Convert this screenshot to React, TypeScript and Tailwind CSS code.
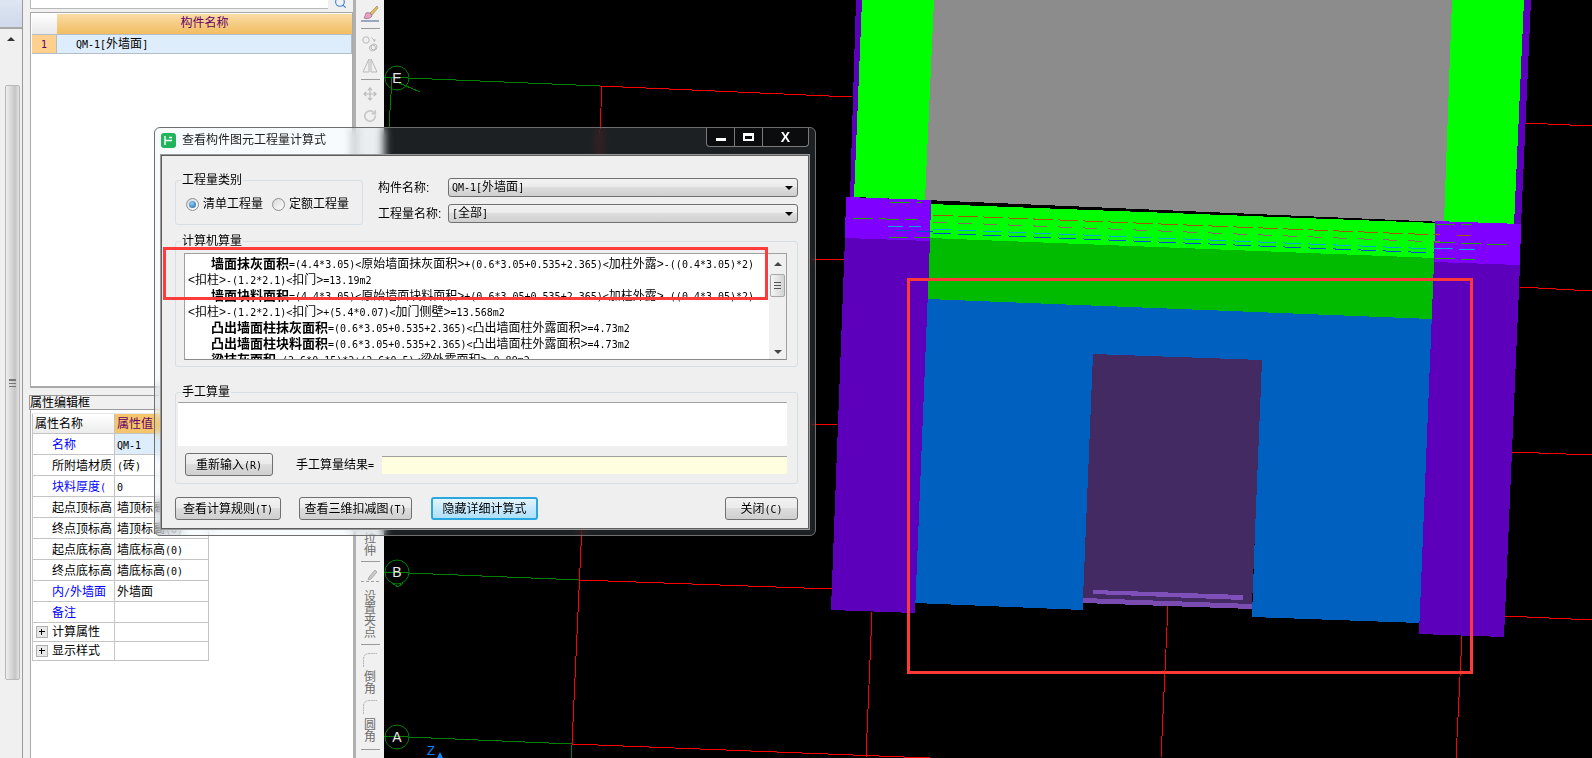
import { Move, RotateCw, Search } from 'lucide-react'

const latin = "font-['DejaVu_Sans_Mono',monospace] text-[10px]"

// SimSun style text: half width latin, full width hanzi
function Mixed({ text }: { text: string }) {
  const parts = text.split(/([<>]|[\x00-\x7f]+)/).filter(Boolean)
  return (
    <>
      {parts.map((p, i) => {
        if (p === '<' || p === '>') return <span key={i} className="font-['Liberation_Sans',sans-serif] text-[12px]">{p}</span>
        if (p.charCodeAt(0) < 128) return <span key={i} className={latin}>{p}</span>
        return <span key={i}>{p}</span>
      })}
    </>
  )
}

const formulaLines = [
  { name: '墙面抹灰面积', rest: '=(4.4*3.05)<原始墙面抹灰面积>+(0.6*3.05+0.535+2.365)<加柱外露>-((0.4*3.05)*2)' },
  { rest: '<扣柱>-(1.2*2.1)<扣门>=13.19m2' },
  { name: '墙面块料面积', rest: '=(4.4*3.05)<原始墙面块料面积>+(0.6*3.05+0.535+2.365)<加柱外露>-((0.4*3.05)*2)' },
  { rest: '<扣柱>-(1.2*2.1)<扣门>+(5.4*0.07)<加门侧壁>=13.568m2' },
  { name: '凸出墙面柱抹灰面积', rest: '=(0.6*3.05+0.535+2.365)<凸出墙面柱外露面积>=4.73m2' },
  { name: '凸出墙面柱块料面积', rest: '=(0.6*3.05+0.535+2.365)<凸出墙面柱外露面积>=4.73m2' },
  { name: '梁抹灰面积', rest: '=(2.6*0.15)*2+(2.6*0.5)<梁外露面积>=0.89m2' },
]

const propRows = [
  { name: '名称', value: 'QM-1', blue: true, active: true },
  { name: '所附墙材质', value: '(砖)' },
  { name: '块料厚度(', value: '0', blue: true },
  { name: '起点顶标高', value: '墙顶标高(0)' },
  { name: '终点顶标高', value: '墙顶标高(0)' },
  { name: '起点底标高', value: '墙底标高(0)' },
  { name: '终点底标高', value: '墙底标高(0)' },
  { name: '内/外墙面', value: '外墙面', blue: true },
  { name: '备注', value: '', blue: true },
]

const polys = [
  { fill: '#5c00bc', points: '856,0 862,0 854,197 850,197' },
  { fill: '#00ff00', points: '862,0 934,0 925,200 854,197' },
  { fill: '#8c8c8c', points: '934,0 1452,0 1444,222 925,200' },
  { fill: '#00ff00', points: '1452,0 1524,0 1514,225 1444,222' },
  { fill: '#5c00bc', points: '1524,0 1531,0 1521,225 1514,225' },
  { fill: '#00ff00', points: '930,204 1436,223 1435,258 929,238' },
  { fill: '#00bb00', points: '929,238 1435,258 1432,319 927,299' },
  { fill: '#0060c0', points: '927,299 1432,319 1420,623 1252,617 1261,360 1093,354 1083,610 915,603' },
  { fill: '#442a62', points: '1093,354 1262,360 1252,606 1083,599' },
  { fill: '#7a4bb0', points: '1083,598 1252,604 1252,609 1083,603' },
  { fill: '#7f4fba', points: '1093,590 1243,595 1243,600 1093,594' },
  { fill: '#8000ff', points: '846,197 931,200 930,241 845,238' },
  { fill: '#5c00bc', points: '845,238 930,241 915,613 831,610' },
  { fill: '#8000ff', points: '1435,221 1521,224 1520,265 1434,262' },
  { fill: '#5c00bc', points: '1434,262 1520,265 1504,637 1419,634' },
]

const gridLines = [
  { stroke: '#008000', x1: 384, y1: 77, x2: 600, y2: 86 },
  { stroke: '#ff0000', x1: 600, y1: 86, x2: 852, y2: 97 },
  { stroke: '#ff0000', x1: 1525, y1: 123, x2: 1592, y2: 126 },
  { stroke: '#ff0000', x1: 810, y1: 259, x2: 844, y2: 260 },
  { stroke: '#ff0000', x1: 1520, y1: 287, x2: 1592, y2: 291 },
  { stroke: '#ff0000', x1: 810, y1: 424, x2: 837, y2: 425 },
  { stroke: '#ff0000', x1: 1512, y1: 452, x2: 1592, y2: 455 },
  { stroke: '#008000', x1: 384, y1: 572, x2: 580, y2: 580 },
  { stroke: '#ff0000', x1: 580, y1: 580, x2: 832, y2: 589 },
  { stroke: '#ff0000', x1: 1505, y1: 616, x2: 1592, y2: 620 },
  { stroke: '#008000', x1: 384, y1: 736, x2: 572, y2: 744 },
  { stroke: '#ff0000', x1: 572, y1: 744, x2: 930, y2: 758 },
  { stroke: '#ff0000', x1: 602, y1: 86, x2: 572, y2: 744 },
  { stroke: '#008000', x1: 572, y1: 745, x2: 571, y2: 758 },
  { stroke: '#008000', x1: 392, y1: 78, x2: 389, y2: 127 },
  { stroke: '#008000', x1: 397, y1: 82, x2: 420, y2: 92 },
  { stroke: '#008000', x1: 392, y1: 583, x2: 398, y2: 587 },
  { stroke: '#008000', x1: 398, y1: 587, x2: 403, y2: 583 },
  { stroke: '#ff0000', x1: 872, y1: 612, x2: 866, y2: 758 },
  { stroke: '#ff0000', x1: 1168, y1: 605, x2: 1161, y2: 758 },
  { stroke: '#ff0000', x1: 1462, y1: 636, x2: 1456, y2: 758 },
]

const bandDashes = [
  { stroke: '#a25a00', dash: '20 5', x1: 933, y1: 215, x2: 1440, y2: 235 },
  { stroke: '#8a6a60', dash: '14 11', x1: 933, y1: 222, x2: 1440, y2: 242 },
  { stroke: '#00a8e0', dash: '18 7', x1: 933, y1: 229, x2: 1436, y2: 249 },
  { stroke: '#0050d0', dash: '18 7', x1: 933, y1: 233, x2: 1436, y2: 253 },
  { stroke: '#20a000', dash: '20 6', x1: 853, y1: 218, x2: 918, y2: 220 },
  { stroke: '#20a000', dash: '20 6', x1: 890, y1: 202, x2: 922, y2: 203 },
  { stroke: '#00a8e0', dash: '16 6', x1: 887, y1: 226, x2: 921, y2: 227 },
  { stroke: '#0050d0', dash: '16 6', x1: 895, y1: 230, x2: 935, y2: 232 },
  { stroke: '#20a000', dash: '20 6', x1: 888, y1: 237, x2: 930, y2: 238 },
  { stroke: '#20a000', dash: '20 6', x1: 1435, y1: 224, x2: 1472, y2: 225 },
  { stroke: '#a25a00', dash: '14 6', x1: 1457, y1: 235, x2: 1477, y2: 236 },
  { stroke: '#20a000', dash: '20 6', x1: 1435, y1: 242, x2: 1512, y2: 245 },
  { stroke: '#00a8e0', dash: '18 6', x1: 1435, y1: 248, x2: 1475, y2: 250 },
  { stroke: '#20a000', dash: '20 6', x1: 1435, y1: 258, x2: 1475, y2: 260 },
]

function AxisMark({ cx, cy, label }: { cx: number; cy: number; label: string }) {
  return (
    <>
      <circle cx={cx} cy={cy} r={12} fill="none" stroke="#008000" />
      <text x={cx} y={cy + 5} fill="#e8e8e8" fontSize={14} textAnchor="middle" fontFamily="Liberation Sans, sans-serif">
        {label}
      </text>
    </>
  )
}

function Model() {
  return (
    <svg className="h-[758px] w-[1208px] shrink-0" viewBox="384 0 1208 758" shapeRendering="crispEdges">
      {gridLines.map((l, i) => (
        <line key={i} {...l} strokeWidth={1} />
      ))}
      {polys.map((p, i) => (
        <polygon key={i} {...p} />
      ))}
      {bandDashes.map(({ dash, ...l }, i) => (
        <line key={i} {...l} strokeDasharray={dash} />
      ))}
      <g shapeRendering="auto">
        <AxisMark cx={397} cy={78} label="E" />
        <AxisMark cx={397} cy={572} label="B" />
        <AxisMark cx={397} cy={737} label="A" />
        <text x={427} y={755} fill="#0a84ff" fontSize={13} fontFamily="Liberation Sans, sans-serif">Z</text>
        <polygon points="437,758 440,752 443,758" fill="#0a84ff" />
      </g>
      <rect x={908.5} y={279.5} width={563} height={393} fill="none" stroke="#ff3838" strokeWidth={3} />
    </svg>
  )
}

function LeftStrip() {
  return (
    <div className="flex w-[30px] shrink-0 bg-[#f0f0f0]">
      <div className="flex w-[23px] flex-col border-r border-[#9a9a9a]">
        <div className="h-[29px] border-b-2 border-[#a8a8a8] bg-[linear-gradient(#dfe6f3,#cfd9ea)]" />
        <div className="flex h-[56px] justify-center pt-[8px]">
          <div className="h-0 w-0 border-x-[4px] border-b-[4px] border-x-transparent border-b-[#333]" />
        </div>
        <div className="ml-[5px] flex h-[595px] w-[15px] flex-col items-center justify-center rounded-[2px] border border-[#b8b8b8] bg-[linear-gradient(90deg,#eeeeee,#d2d2d2_50%,#c4c4c4_70%,#e4e4e4)]">
          <div className="h-[8px] w-[7px] border-y border-[#777] bg-[linear-gradient(#777_1px,transparent_1px)] bg-[length:100%_3px]" />
        </div>
      </div>
    </div>
  )
}

function ComponentPanel() {
  return (
    <div className="flex w-[323px] shrink-0 flex-col bg-white">
      <div className="flex h-[12px] bg-[#f0f0f0]">
        <div className="h-[9px] w-[298px] border-b border-l border-[#b8b8b8] bg-white" />
        <div className="ml-[2px] flex h-[9px] w-[20px] items-end justify-center overflow-hidden">
          <Search className="h-[13px] w-[13px] text-[#3a7fd0]" />
        </div>
      </div>
      <div className="flex h-[376px] flex-col border border-b-2 border-[#a9a9a9] pl-[1px] pt-[1px]">
        <div className="flex h-[20px] w-[320px]">
          <div className="w-[25px] bg-[linear-gradient(#ffffff,#e8e8e8)]" />
          <div className="flex-1 bg-[linear-gradient(#fbdba6,#f1bd60)] text-center text-[12px] leading-[18px] text-[#660066]">构件名称</div>
        </div>
        <div className="flex h-[20px] w-[320px] border-y border-[#b4bcc6] text-[12px] leading-[18px]">
          <div className="w-[25px] border-r border-[#b4bcc6] bg-[#fdd08e] text-center text-[#660066]"><Mixed text="1" /></div>
          <div className="flex-1 border-r border-[#b4bcc6] bg-[#deedfb] pl-[19px]"><Mixed text="QM-1[外墙面]" /></div>
        </div>
      </div>
      <div className="h-[7px] bg-[#f0f0f0]" />
      <div className="ml-[-1px] h-[15px] border border-[#9a9a9a] bg-[#f0f0f0] text-[12px] leading-[14px]">属性编辑框</div>
      <div className="flex-1 border-l border-[#a9a9a9] pl-[1px] pt-[3px] text-[12px]">
        <div className="flex h-[21px] w-[177px] border-y border-[#c4c4c4] border-t-[#e8e8e8] leading-[20px]">
          <div className="w-[83px] border-x border-[#c4c4c4] bg-[linear-gradient(#ffffff,#ececec)] pl-[2px]">属性名称</div>
          <div className="flex-1 bg-[#f5c56c] pl-[2px] text-[#660066]">属性值</div>
        </div>
        {propRows.map((r) => (
          <div key={r.name} className="flex h-[21px] w-[177px] border-b border-[#c4c4c4] leading-[23px]">
            <div className={`w-[83px] border-x border-[#c4c4c4] pl-[19px] ${r.blue ? 'text-[#0000ff]' : 'text-black'}`}><Mixed text={r.name} /></div>
            <div className={`flex-1 border-r border-[#c4c4c4] pl-[2px] ${r.active ? 'bg-[#deedfb]' : ''}`}><Mixed text={r.value} /></div>
          </div>
        ))}
        {['计算属性', '显示样式'].map((n) => (
          <div key={n} className="flex h-[19px] w-[177px] border-b border-[#c4c4c4] leading-[20px]">
            <div className="flex w-[83px] items-center border-x border-[#c4c4c4] pl-[3px]">
              <span className="relative h-[12px] w-[12px] border border-[#b0b0b0] bg-[#e8e8e8]">
                <span className="absolute left-[2px] top-[4px] h-[1px] w-[6px] bg-black" />
                <span className="absolute left-[4px] top-[2px] h-[6px] w-[1px] bg-black" />
              </span>
              <span className="ml-[4px]">{n}</span>
            </div>
            <div className="flex-1 border-r border-[#c4c4c4]" />
          </div>
        ))}
      </div>
    </div>
  )
}

function ToolSep() {
  return <div className="my-[1px] h-[1px] w-[19px] bg-[#9a9a9a]" />
}

function VText({ text }: { text: string }) {
  return <div className="w-[13px] text-center text-[12px] leading-[12px] text-[#6e6e6e]">{text}</div>
}

function FilletIcon() {
  return (
    <svg width="16" height="16" viewBox="0 0 16 16" fill="none" stroke="#b4b4b4">
      <path d="M1.5 15V7Q1.5 1.5 8 1.5H15" strokeDasharray="2 0.6" />
    </svg>
  )
}

function Toolbar() {
  return (
    <div className="flex w-[31px] shrink-0 border-l-[3px] border-[#b0b0b0] bg-[#f0f0f0]">
      <div className="flex h-[758px] w-full flex-col items-center">
        <svg className="mt-[5px]" width="18" height="17" viewBox="0 0 18 17">
          <path d="M16 1 9 8l2 2 6-7Z" fill="#e0c060" stroke="#8a7a40" strokeWidth=".6" />
          <path d="M5 8c3-1 5 0 6 3-2 3-6 3-8 2 1-1 1-3 2-5Z" fill="#e8a0c8" stroke="#80506a" strokeWidth=".6" />
          <path d="M0 16h18" stroke="#40608a" />
        </svg>
        <div className="mt-[5px]"><ToolSep /></div>
        <svg className="mt-[6px]" width="16" height="16" viewBox="0 0 16 16" fill="none" stroke="#b8b8b8">
          <circle cx="4" cy="4" r="3.2" />
          <circle cx="10.5" cy="12" r="3" />
          <circle cx="12" cy="11" r="3" />
          <path d="M9.5 1.5 13 5M13 3v2h-2" />
        </svg>
        <svg className="mt-[6px]" width="16" height="15" viewBox="0 0 16 15" fill="none" stroke="#b8b8b8">
          <path d="M7 1 1 14h6ZM9 1l6 13H9Z" />
        </svg>
        <div className="mt-[5px]"><ToolSep /></div>
        <Move className="mt-[6px] h-[14px] w-[14px] text-[#b8b8b8]" strokeWidth={2} />
        <RotateCw className="mt-[8px] h-[14px] w-[14px] text-[#c8c8c8]" strokeWidth={3} />
        <div className="h-[410px] shrink-0" />
        <VText text="拉" />
        <VText text="伸" />
        <div className="mt-[3px]"><ToolSep /></div>
        <svg className="mt-[6px]" width="18" height="14" viewBox="0 0 18 14" fill="none">
          <path d="M14 1 8 8l-1 3 3-1 6-7Z" fill="#c8c8c8" stroke="#b0b0b0" />
          <path d="M0 12.5h18" stroke="#a0a0a0" strokeDasharray="3 2" />
        </svg>
        <div className="mt-[8px]">
          {['设', '置', '夹', '点'].map((c) => <VText key={c} text={c} />)}
        </div>
        <div className="mt-[4px]"><ToolSep /></div>
        <div className="mt-[6px]"><FilletIcon /></div>
        <div className="mt-[3px]"><VText text="倒" /><VText text="角" /></div>
        <div className="mt-[4px]"><FilletIcon /></div>
        <div className="mt-[4px]"><VText text="圆" /><VText text="角" /></div>
        <div className="mt-[5px]"><ToolSep /></div>
      </div>
    </div>
  )
}

function GroupBox({ title, className, children }: { title: string; className: string; children: React.ReactNode }) {
  return (
    <fieldset className={`rounded-[3px] border border-[#d5dfe5] ${className}`}>
      <legend className="ml-[5px] h-[16px] px-[1px] text-[12px] leading-[16px] text-black">{title}</legend>
      {children}
    </fieldset>
  )
}

function Radio({ label, checked }: { label: string; checked?: boolean }) {
  return (
    <div className="flex items-center gap-[4px]">
      <span className="flex h-[13px] w-[13px] items-center justify-center rounded-full border border-[#8e8f8f] bg-[linear-gradient(135deg,#d8d8d8,#ffffff)]">
        {checked && <span className="h-[7px] w-[7px] rounded-full bg-[radial-gradient(circle_at_40%_35%,#8fd0f5,#1a5fa8)]" />}
      </span>
      <span>{label}</span>
    </div>
  )
}

function Combo({ text }: { text: string }) {
  return (
    <div className="flex h-[19px] w-[350px] items-center justify-between rounded-[3px] border border-[#707070] bg-[linear-gradient(#f2f2f2,#ebebeb_45%,#dddddd_50%,#cfcfcf)] pl-[3px] pr-[4px]">
      <span className="leading-[17px]"><Mixed text={text} /></span>
      <span className="h-0 w-0 border-x-[4px] border-t-[4px] border-x-transparent border-t-black" />
    </div>
  )
}

function WinButton({ text, className, focused }: { text: string; className: string; focused?: boolean }) {
  const skin = focused
    ? 'border-2 border-[#2ba7e0] bg-[linear-gradient(#e4f5fd,#c8e9fb_50%,#aee0f9)]'
    : 'border border-[#707070] bg-[linear-gradient(#f2f2f2,#ebebeb_45%,#dddddd_50%,#cfcfcf)]'
  return (
    <div className={`flex h-[23px] shrink-0 items-center justify-center rounded-[3px] text-[12px] ${skin} ${className}`}>
      <span><Mixed text={text} /></span>
    </div>
  )
}

function Dialog() {
  return (
    <div className="absolute left-[154px] top-[127px] flex h-[409px] w-[662px] flex-col rounded-[6px] border border-[#6e6e6e] bg-[rgba(200,228,245,0.14)] px-[6px] pb-[6px] backdrop-blur-[4px]">
      <div className="flex h-[27px] shrink-0 items-start">
        <div className="mt-[5px] flex h-[15px] w-[15px] items-center justify-center rounded-[3px] bg-[#21b45c]">
          <svg width="11" height="11" viewBox="0 0 11 11" fill="none" stroke="#fff" strokeWidth="1.4">
            <path d="M2 1v9M2 5.5h7M6 2.5h3" />
          </svg>
        </div>
        <span className="ml-[6px] mt-[4px] text-[12px] leading-[17px] text-[#1c1c1c]">查看构件图元工程量计算式</span>
        <div className="ml-auto flex h-[19px] w-[103px] rounded-b-[4px] border border-t-0 border-[#7a7a7a] bg-black/60">
          <div className="flex w-[28px] items-center justify-center border-r border-[#7a7a7a]"><span className="mt-[4px] h-[3px] w-[10px] bg-white" /></div>
          <div className="flex w-[28px] items-center justify-center border-r border-[#7a7a7a]"><span className="h-[8px] w-[11px] border-2 border-t-[3px] border-white" /></div>
          <div className="flex flex-1 items-center justify-center font-['Liberation_Sans',sans-serif] text-[14px] font-bold leading-none text-white">X</div>
        </div>
      </div>
      <div className="flex min-h-0 flex-1 flex-col border border-[#5e5e5e] bg-[#efefef] pl-[13px] pr-[10px] pt-[16px] text-[12px] text-black outline outline-1 outline-[#9a9a9a]">
        <div className="flex h-[53px] shrink-0">
          <GroupBox title="工程量类别" className="h-[53px] w-[188px] shrink-0">
            <div className="flex gap-[9px] pl-[10px] pt-[7px]">
              <Radio label="清单工程量" checked />
              <Radio label="定额工程量" />
            </div>
          </GroupBox>
          <div className="ml-[15px] flex flex-1 flex-col gap-[7px] pt-[6px]">
            <div className="flex items-center">
              <span className="w-[70px]">构件名称:</span>
              <Combo text="QM-1[外墙面]" />
            </div>
            <div className="flex items-center">
              <span className="w-[70px]">工程量名称:</span>
              <Combo text="[全部]" />
            </div>
          </div>
        </div>
        <GroupBox title="计算机算量" className="mt-[8px] h-[134px] shrink-0">
          <div className="ml-[8px] mr-[10px] mt-[4px] flex h-[107px] border border-[#a0a0a0] border-b-[#8a8a8a] bg-white">
            <div className="min-w-0 flex-1 overflow-hidden pt-[2px]">
              {formulaLines.map((l, i) => (
                <div key={i} className={`h-[16px] whitespace-nowrap leading-[16px] ${l.name ? 'pl-[26px]' : 'pl-[3px]'}`}>
                  {l.name && <span className="text-[13px] font-bold">{l.name}</span>}
                  <Mixed text={l.rest} />
                </div>
              ))}
            </div>
            <div className="flex w-[17px] shrink-0 flex-col items-center bg-[#f0f0f0]">
              <div className="flex h-[20px] items-center">
                <span className="h-0 w-0 border-x-[4px] border-b-[4px] border-x-transparent border-b-[#444]" />
              </div>
              <div className="flex h-[23px] w-[15px] items-center justify-center rounded-[2px] border border-[#a8a8a8] bg-[linear-gradient(90deg,#f4f4f4,#d4d4d4)]">
                <div className="h-[7px] w-[7px] bg-[linear-gradient(#555_1px,transparent_1px)] bg-[length:100%_3px]" />
              </div>
              <div className="mt-auto flex h-[14px] items-center">
                <span className="h-0 w-0 border-x-[4px] border-t-[4px] border-x-transparent border-t-[#444]" />
              </div>
            </div>
          </div>
        </GroupBox>
        <GroupBox title="手工算量" className="mt-[17px] h-[100px] shrink-0">
          <div className="ml-[2px] mr-[10px] mt-[2px]">
            <div className="h-[44px] rounded-[1px] border-t border-[#a0a0a0] bg-white" />
            <div className="mt-[7px] flex items-center pl-[7px]">
              <WinButton text="重新输入(R)" className="w-[88px]" />
              <span className="ml-[23px] w-[86px] shrink-0"><Mixed text="手工算量结果=" /></span>
              <div className="h-[18px] flex-1 border-t border-[#a0a0a0] bg-[#ffffe0]" />
            </div>
          </div>
        </GroupBox>
        <div className="mt-[13px] flex">
          <WinButton text="查看计算规则(T)" className="w-[106px]" />
          <WinButton text="查看三维扣减图(T)" className="ml-[18px] w-[113px]" />
          <WinButton text="隐藏详细计算式" className="ml-[19px] w-[107px]" focused />
          <WinButton text="关闭(C)" className="ml-auto w-[73px]" />
        </div>
      </div>
      <div className="pointer-events-none absolute left-[8px] top-[119px] h-[53px] w-[605px] border-[3px] border-[#ff3b3b]" />
    </div>
  )
}

export default function App() {
  return (
    <div className="relative flex h-[758px] w-[1592px] overflow-hidden bg-black font-['Liberation_Sans','Noto_Sans_CJK_SC',sans-serif]">
      <LeftStrip />
      <ComponentPanel />
      <Toolbar />
      <Model />
      <Dialog />
    </div>
  )
}
